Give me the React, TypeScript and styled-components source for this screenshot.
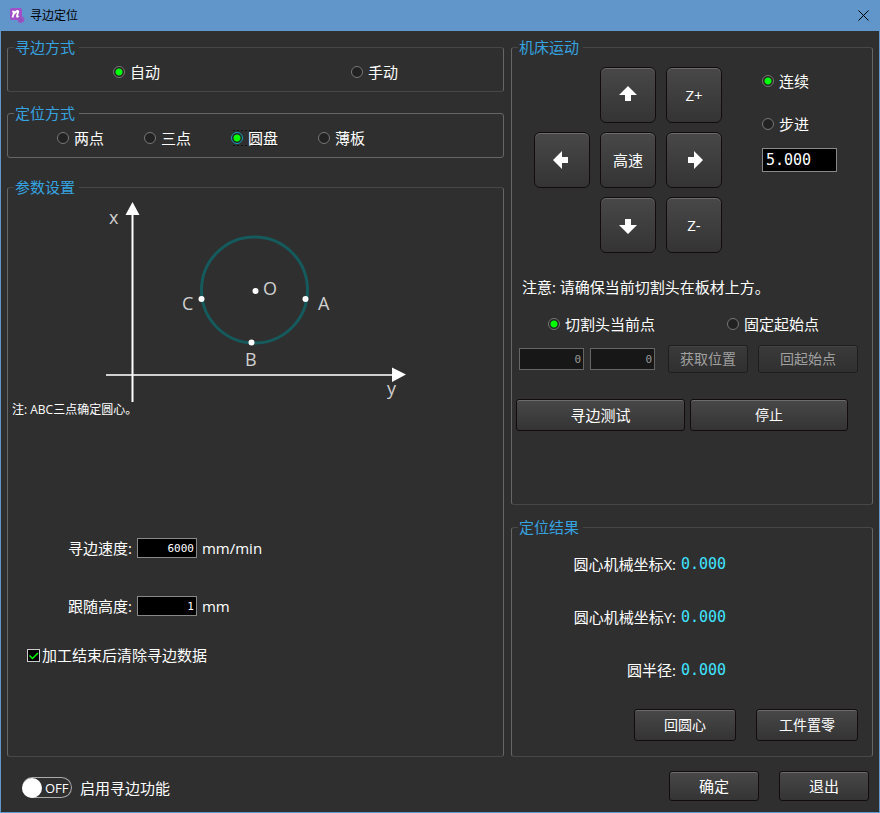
import React, { useId, useState } from 'react';
import styled, { createGlobalStyle, css } from 'styled-components';

const sans = '"Open Sans", "Noto Sans CJK SC", sans-serif';
const mono = '"DejaVu Sans Mono", "Noto Sans CJK SC", monospace';

const GlobalStyle = createGlobalStyle`
  *, *::before, *::after { box-sizing: border-box; }
  body { margin: 0; background: #2f2f2f; }
  button, input { font: inherit; color: inherit; margin: 0; }
`;

const Window = styled.div`
  display: flex;
  flex-direction: column;
  min-height: 100vh;
  border: 1px solid #6196cb;
  background: #2f2f2f;
  color: #fff;
  font: 15px/20px ${sans};
`;

const TitleBar = styled.header`
  display: flex;
  align-items: center;
  height: 30px;
  padding: 0 9px 0 8px;
  gap: 5px;
  background: #6196cb;
  color: #000;
`;

const Title = styled.h1`
  flex: 1;
  margin: 0;
  font-size: 12px;
  line-height: 16px;
  font-weight: 400;
`;

const CloseButton = styled.button`
  display: flex;
  padding: 0 0 2px;
  border: 0;
  background: none;
`;

const Body = styled.main`
  flex: 1;
  display: grid;
  grid-template-columns: 497fr 362fr;
  gap: 7px;
  padding: 6px 6px 0;
`;

const Column = styled.div<{ $gap: number }>`
  display: flex;
  flex-direction: column;
  gap: ${p => p.$gap}px;
`;

const Group = styled.fieldset<{ $grow?: boolean; $strong?: boolean; $last?: boolean }>`
  min-width: 0;
  margin: ${p => (p.$last ? '8px 0 0' : '0')};
  padding: 0 0 6px;
  border: 1px solid;
  border-color: ${p => (p.$strong ? '#666' : '#474747 #666')};
  border-radius: 3px;
  flex: ${p => (p.$grow ? '1 0 auto' : '0 0 auto')};
`;

const Legend = styled.legend`
  margin-left: 6px;
  padding: 0 4px 0 1px;
  line-height: 21px;
  color: #35a3e0;
`;

const ModeRow = styled.div`
  display: flex;
  justify-content: space-between;
  align-items: center;
  height: 27px;
  padding: 0 105px;
`;

const TypeRow = styled(ModeRow)`
  justify-content: flex-start;
  gap: 40px;
  padding: 0 49px;
`;

const RadioLabel = styled.label<{ $focus?: boolean }>`
  display: inline-flex;
  align-items: center;
  gap: 5px;
  white-space: nowrap;
  ${p => p.$focus && css`
    background:
      repeating-linear-gradient(90deg, #111 0 2px, transparent 2px 4px) 2px 2px / 43px 1px no-repeat,
      repeating-linear-gradient(90deg, #111 0 2px, transparent 2px 4px) 2px 17px / 43px 1px no-repeat;
  `}
`;

const RadioInput = styled.input<{ $focus?: boolean }>`
  appearance: none;
  width: 12px;
  height: 12px;
  border: 1px solid ${p => (p.$focus ? '#16a0c0' : '#777')};
  border-radius: 50%;
  background: #222;
  &:checked { background: radial-gradient(circle, #0f0 0 3px, #222 4px); }
`;

const Diagram = styled.svg`
  display: block;
  margin-left: 90px;
  width: 320px;
  height: 204px;
  font: 18px ${sans};
  fill: #d0d0d0;
`;

const Note = styled.p`
  margin: 0 0 0 4px;
  font-size: 12px;
  line-height: 16px;
`;

const Params = styled.div`
  display: grid;
  grid-template-columns: auto auto 1fr;
  align-items: center;
  gap: 38px 5px;
  margin: 120px 0 0 60px;
`;

const Field = styled.input<{ $w: number; $h: number; $big?: boolean }>`
  width: ${p => p.$w}px;
  height: ${p => p.$h}px;
  padding: 0 ${p => (p.$big ? '3px' : '2px')};
  border: 1px solid #888;
  border-radius: 0;
  background: #000;
  color: #fff;
  font: ${p => (p.$big ? '15px' : '11px')} ${mono};
  text-align: ${p => (p.$big ? 'left' : 'right')};
  &:disabled {
    border-color: #666;
    background: #171717;
    color: #999;
  }
`;

const CheckLabel = styled.label`
  display: flex;
  align-items: center;
  gap: 2px;
  margin: 29px 0 0 19px;
`;

const CheckInput = styled.input`
  appearance: none;
  width: 13px;
  height: 13px;
  border: 1px solid #ccc;
  background: #000;
`;

const CheckWrap = styled.span`
  position: relative;
  display: flex;
  svg {
    position: absolute;
    inset: 0;
    pointer-events: none;
  }
`;

const Button = styled.button<{ $w: number; $h: number; $small?: boolean; $round?: boolean }>`
  display: flex;
  align-items: center;
  justify-content: center;
  width: ${p => p.$w}px;
  height: ${p => p.$h}px;
  padding: 0;
  border: 1px solid #120c0e;
  border-radius: ${p => (p.$round ? '6px' : '3px')};
  background: linear-gradient(#484848, #343434);
  box-shadow: inset 0 1px #6c6c6c;
  color: #fff;
  font-size: ${p => (p.$small ? '14px' : '15px')};
  &:disabled {
    border-color: #1e1e1e;
    background: linear-gradient(#3a3a3a, #303030);
    box-shadow: inset 0 1px #444;
    color: #a0a0a0;
  }
`;

const Motion = styled.div`
  display: flex;
  padding: 9px 0 0 22px;
  gap: 40px;
`;

const Keypad = styled.div`
  display: grid;
  grid-template-columns: repeat(3, 56px);
  gap: 9px 10px;
  button:first-child { grid-column: 2; }
  button:nth-child(6) { grid-column: 2; }
`;

const StepColumn = styled.div`
  display: flex;
  flex-direction: column;
  align-items: flex-start;
  padding-top: 4px;
`;

const StepRadio = styled.div`
  display: flex;
  height: 20px;
  margin-bottom: 23px;
  & + & { margin-bottom: 14px; }
`;

const Warning = styled.p`
  margin: 24px 0 0 10px;
`;

const OriginRow = styled.div`
  display: flex;
  gap: 72px;
  margin: 17px 0 0 36px;
`;

const PositionRow = styled.div`
  display: flex;
  align-items: center;
  gap: 6px;
  margin: 11px 14px 0 7px;
`;

const PositionButtons = styled.div`
  display: flex;
  gap: 10px;
  margin-left: 7px;
`;

const ActionRow = styled.div`
  display: flex;
  gap: 5px;
  margin: 26px 0 0 4px;
`;

const Results = styled.dl`
  display: grid;
  grid-template-columns: 164px 1fr;
  align-items: center;
  gap: 33px 5px;
  margin: 16px 0 0;
  dt { text-align: right; white-space: nowrap; }
  dd { margin: 0; color: #3fe4ff; font-family: ${mono}; }
`;

const ResultButtons = styled.div`
  display: flex;
  justify-content: flex-end;
  gap: 20px;
  margin: 29px 14px 9px 0;
`;

const Footer = styled.footer`
  display: flex;
  align-items: center;
  justify-content: space-between;
  padding: 14px 10px 11px 21px;
`;

const FooterButtons = styled.div`
  display: flex;
  gap: 20px;
`;

const SwitchLabel = styled.label`
  display: flex;
  align-items: center;
  gap: 8px;
  padding-top: 3px;
`;

const SwitchTrack = styled.span`
  display: flex;
  align-items: center;
  width: 50px;
  height: 21px;
  gap: 3px;
  border: 1px solid #aaa;
  border-left: 0;
  border-radius: 11px;
  font-size: 13px;
  &:focus-within { border-color: #ccc; }
`;

const SwitchInput = styled.input`
  appearance: none;
  flex: none;
  width: 20px;
  height: 20px;
  border-radius: 50%;
  background: #fff;
`;

function Radio({ name, label, checked, focus }: { name: string; label: string; checked?: boolean; focus?: boolean }) {
  return (
    <RadioLabel $focus={focus}>
      <RadioInput type="radio" name={name} defaultChecked={checked} $focus={focus} />
      {label}
    </RadioLabel>
  );
}

function Arrow({ angle }: { angle: number }) {
  return (
    <svg width="18" height="18" viewBox="0 0 18 18" aria-hidden="true">
      <path d="M9 0 L18 9 H12 V15 H6 V9 H0 Z" fill="#fff" transform={`rotate(${angle} 9 9)`} />
    </svg>
  );
}

function AppIcon() {
  return (
    <svg width="16" height="16" viewBox="0 0 16 16" aria-hidden="true">
      <rect x="1" y="0" width="12" height="12" rx="2" fill="#a050c8" />
      <path d="M3.500 9.500 L5.500 3 M3.200 3.600 H5.500 M5 6 Q8.500 1.500 9.300 3.600 L7.900 8 Q7.900 9.600 10 8.300" fill="none" stroke="#fff" strokeWidth="1.800" />
      <path d="M11.500 8 l1.200 1 1.600-.4 .4 1.600 1.200 1.100 -1.100 1.200 .2 1.600 -1.700 .2 -1.200 1.200 -1.300-1 -1.700 .1 -.1-1.700 -1.100-1.300 1.300-1.100 .2-1.700 1.600 .1z" fill="#9852c2" />
      <circle cx="11.800" cy="11.800" r="1" fill="#8a48b2" />
    </svg>
  );
}

function CircleDiagram() {
  return (
    <Diagram viewBox="98 198 320 204" role="img" aria-label="ABC">
      <circle cx="254.500" cy="290" r="53" fill="none" stroke="#155a5c" strokeWidth="3" />
      <path d="M106 375 H394" stroke="#d0d0d0" strokeWidth="2" />
      <path d="M132.500 402 V212" stroke="#fff" strokeWidth="2" />
      <path d="M132.500 202 L139.500 215 H125.500 Z M406 374.500 L392 367.500 V382 Z" fill="#fff" />
      <g fill="#fff">
        <circle cx="255.500" cy="291" r="3" />
        <circle cx="201.500" cy="299" r="3" />
        <circle cx="305.500" cy="299" r="3" />
        <circle cx="251.500" cy="342.500" r="3" />
      </g>
      <text x="109" y="224">x</text>
      <text x="387" y="395">y</text>
      <text x="263" y="295">O</text>
      <text x="318" y="310">A</text>
      <text x="182" y="310">C</text>
      <text x="245" y="366">B</text>
    </Diagram>
  );
}

export default function App() {
  const id = useId();
  const [clear, setClear] = useState(true);
  const [on, setOn] = useState(false);
  return (
    <>
      <GlobalStyle />
      <Window>
        <TitleBar>
          <AppIcon />
          <Title>寻边定位</Title>
          <CloseButton type="button" aria-label="关闭">
            <svg width="13" height="13" viewBox="0 0 13 13">
              <path d="M1.500 1.500 L11.500 11.500 M11.500 1.500 L1.500 11.500" stroke="#000" />
            </svg>
          </CloseButton>
        </TitleBar>

        <Body>
          <Column $gap={11}>
            <Group>
              <Legend>寻边方式</Legend>
              <ModeRow>
                <Radio name="mode" label="自动" checked />
                <Radio name="mode" label="手动" />
              </ModeRow>
            </Group>
            <Group $strong>
              <Legend>定位方式</Legend>
              <TypeRow>
                <Radio name="type" label="两点" />
                <Radio name="type" label="三点" />
                <Radio name="type" label="圆盘" checked focus />
                <Radio name="type" label="薄板" />
              </TypeRow>
            </Group>
            <Group $grow $last>
              <Legend>参数设置</Legend>
              <CircleDiagram />
              <Note>注: ABC三点确定圆心。</Note>
              <Params>
                <label htmlFor={`${id}speed`}>寻边速度:</label>
                <Field id={`${id}speed`} $w={60} $h={20} defaultValue="6000" />
                <span>mm/min</span>
                <label htmlFor={`${id}height`}>跟随高度:</label>
                <Field id={`${id}height`} $w={60} $h={20} defaultValue="1" />
                <span>mm</span>
              </Params>
              <CheckLabel>
                <CheckWrap>
                  <CheckInput type="checkbox" checked={clear} onChange={e => setClear(e.target.checked)} />
                  {clear && (
                    <svg width="13" height="13" viewBox="0 0 13 13" aria-hidden="true">
                      <path d="M2.500 6.500 L5.500 9.500 L11 4" fill="none" stroke="#0f0" strokeWidth="1.500" />
                    </svg>
                  )}
                </CheckWrap>
                加工结束后清除寻边数据
              </CheckLabel>
            </Group>
          </Column>

          <Column $gap={12}>
            <Group $grow>
              <Legend>机床运动</Legend>
              <Motion>
                <Keypad>
                  <Button type="button" $w={56} $h={56} $round aria-label="上"><Arrow angle={0} /></Button>
                  <Button type="button" $w={56} $h={56} $round>Z+</Button>
                  <Button type="button" $w={56} $h={56} $round aria-label="左"><Arrow angle={270} /></Button>
                  <Button type="button" $w={56} $h={56} $round>高速</Button>
                  <Button type="button" $w={56} $h={56} $round aria-label="右"><Arrow angle={90} /></Button>
                  <Button type="button" $w={56} $h={56} $round aria-label="下"><Arrow angle={180} /></Button>
                  <Button type="button" $w={56} $h={56} $round>Z-</Button>
                </Keypad>
                <StepColumn>
                  <StepRadio><Radio name="motion" label="连续" checked /></StepRadio>
                  <StepRadio><Radio name="motion" label="步进" /></StepRadio>
                  <Field aria-label="步进" $w={75} $h={24} $big defaultValue="5.000" />
                </StepColumn>
              </Motion>
              <Warning>注意: 请确保当前切割头在板材上方。</Warning>
              <OriginRow>
                <Radio name="origin" label="切割头当前点" checked />
                <Radio name="origin" label="固定起始点" />
              </OriginRow>
              <PositionRow>
                <Field aria-label="X" $w={65} $h={22} defaultValue="0" disabled />
                <Field aria-label="Y" $w={65} $h={22} defaultValue="0" disabled />
                <PositionButtons>
                  <Button type="button" $w={80} $h={28} $small disabled>获取位置</Button>
                  <Button type="button" $w={100} $h={28} $small disabled>回起始点</Button>
                </PositionButtons>
              </PositionRow>
              <ActionRow>
                <Button type="button" $w={169} $h={32}>寻边测试</Button>
                <Button type="button" $w={158} $h={32} $small>停止</Button>
              </ActionRow>
            </Group>
            <Group>
              <Legend>定位结果</Legend>
              <Results>
                <dt>圆心机械坐标X:</dt><dd>0.000</dd>
                <dt>圆心机械坐标Y:</dt><dd>0.000</dd>
                <dt>圆半径:</dt><dd>0.000</dd>
              </Results>
              <ResultButtons>
                <Button type="button" $w={102} $h={32} $small>回圆心</Button>
                <Button type="button" $w={102} $h={32} $small>工件置零</Button>
              </ResultButtons>
            </Group>
          </Column>
        </Body>

        <Footer>
          <SwitchLabel>
            <SwitchTrack>
              <SwitchInput type="checkbox" role="switch" checked={on} onChange={e => setOn(e.target.checked)} />
              {on ? 'ON' : 'OFF'}
            </SwitchTrack>
            启用寻边功能
          </SwitchLabel>
          <FooterButtons>
            <Button type="button" $w={90} $h={30}>确定</Button>
            <Button type="button" $w={90} $h={30}>退出</Button>
          </FooterButtons>
        </Footer>
      </Window>
    </>
  );
}
